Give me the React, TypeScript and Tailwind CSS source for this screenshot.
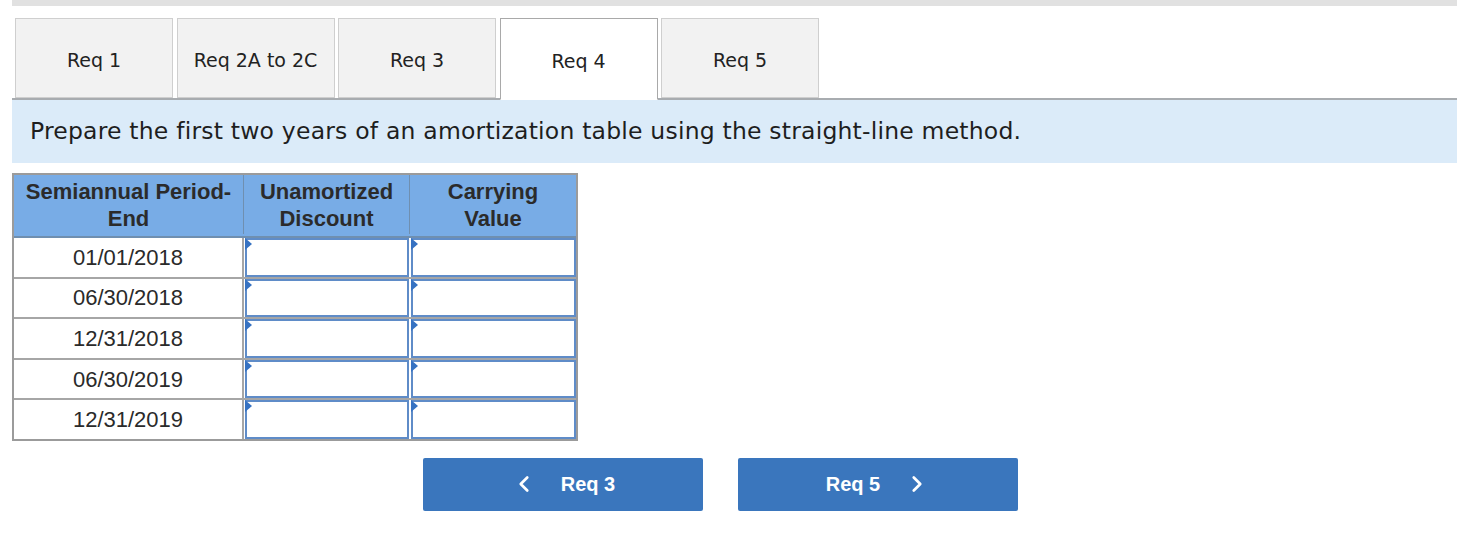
import { ChevronLeft, ChevronRight } from 'lucide-react';

const tabs = ['Req 1', 'Req 2A to 2C', 'Req 3', 'Req 4', 'Req 5'];
const rows = ['01/01/2018', '06/30/2018', '12/31/2018', '06/30/2019', '12/31/2019'];

function InputCell() {
    return (
        <div className="relative h-full border-2 border-[#5f8cc8] bg-white">
            <span className="absolute -left-[2px] -top-[2px] h-0 w-0 border-y-[6px] border-l-[7px] border-y-transparent border-l-[#3672c2]" />
        </div>
    );
}

export default function App() {
    const active = 'Req 4';

    return (
        <div className="min-h-screen bg-white px-[12px] font-['DejaVu_Sans',Verdana,sans-serif] text-[#222]">
            {/* top strip */}
            <div className="h-[6px] bg-[#e1e1e1]" />

            {/* Tabs */}
            <div className="mt-[12px] flex gap-[3.5px] pl-[3px]">
                {tabs.map((t) => (
                    <div
                        key={t}
                        className={`flex h-[80px] w-[158px] items-center justify-center border pt-[4px] text-[19px] ${
                            t === active
                                ? 'relative z-10 -mb-[2px] h-[82px] border-[#a9a9a9] border-b-white bg-white'
                                : 'border-[#cfcfcf] bg-[#f2f2f2]'
                        }`}
                    >
                        {t}
                    </div>
                ))}
            </div>
            <div className="h-[2px] bg-[#a8acb0]" />

            {/* Instructions */}
            <div className="flex h-[63px] items-center bg-[#dbebf9] pl-[18px] text-[23.5px] tracking-[0.2px] text-[#1e1e1e]">
                Prepare the first two years of an amortization table using the straight-line method.
            </div>

            {/* Table */}
            <div className="mt-[10px] w-[566px] border-2 border-[#9b9b9b] font-['Liberation_Sans',Arial,sans-serif] text-[22px]">
                <div className="grid h-[61px] grid-cols-[230px_166px_166px] bg-[#78ace6] pb-[2px] font-bold leading-[27px] text-[#2b2b2b]">
                    <div className="flex flex-col items-center justify-center border-r border-[#6f8fb0]">
                        <span>Semiannual Period-</span>
                        <span>End</span>
                    </div>
                    <div className="flex flex-col items-center justify-center border-r border-[#6f8fb0]">
                        <span>Unamortized</span>
                        <span>Discount</span>
                    </div>
                    <div className="flex flex-col items-center justify-center">
                        <span>Carrying</span>
                        <span>Value</span>
                    </div>
                </div>
                {rows.map((d, i) => (
                    <div
                        key={d}
                        className={`grid h-[40.6px] grid-cols-[230px_166px_166px] border-t-2 ${
                            i === 0 ? 'border-[#6f8fb0]' : 'border-[#a6a6a6]'
                        }`}
                    >
                        <div className="flex items-center justify-center border-r-2 border-[#a6a6a6] text-[#2a2a2a]">{d}</div>
                        <div className="pl-[1px] pr-[1px]">
                            <InputCell />
                        </div>
                        <div className="pl-[1px]">
                            <InputCell />
                        </div>
                    </div>
                ))}
            </div>

            {/* Nav buttons */}
            <div className="mt-[17px] flex gap-[35px] pl-[411px] font-['Liberation_Sans',Arial,sans-serif]">
                <button className="flex h-[53px] w-[280px] items-center justify-center gap-[24px] rounded-[2px] bg-[#3a76bd] text-[20px] font-bold text-white">
                    <ChevronLeft size={26} strokeWidth={2.5} />
                    <span>Req 3</span>
                </button>
                <button className="flex h-[53px] w-[280px] items-center justify-center gap-[24px] rounded-[2px] bg-[#3a76bd] text-[20px] font-bold text-white">
                    <span>Req 5</span>
                    <ChevronRight size={26} strokeWidth={2.5} />
                </button>
            </div>
        </div>
    );
}
